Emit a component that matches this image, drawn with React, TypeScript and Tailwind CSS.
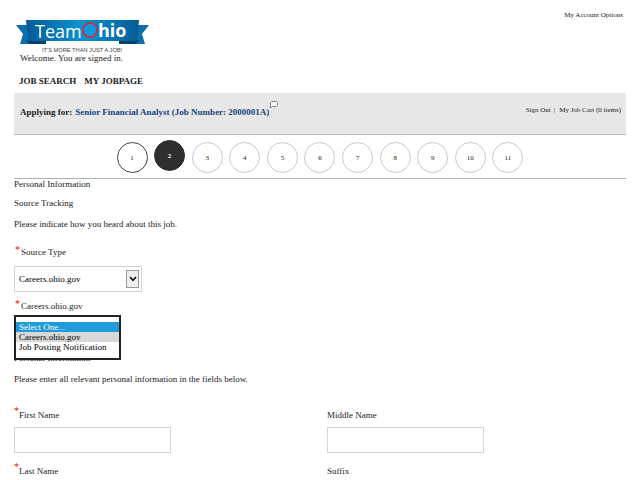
import { useState } from 'react';

const steps = [1, 2, 3, 4, 5, 6, 7, 8, 9, 10, 11];
const sources = ['Select One...', 'Careers.ohio.gov', 'Job Posting Notification'];

function Logo() {
  return (
    <svg className="block h-[38px] w-[134px]" viewBox="0 0 134 38" role="img" aria-label="TeamOhio">
      <defs>
        <linearGradient id="band" x1="0" x2="1" y1="0" y2="0">
          <stop offset="0" stopColor="#045b95" />
          <stop offset="0.5" stopColor="#0a93d3" />
          <stop offset="1" stopColor="#045b95" />
        </linearGradient>
      </defs>
      <path d="M0 6H15V25H4L7 15Z" fill="#0b6fae" />
      <path d="M133 6H118V25H129L126 15Z" fill="#0b6fae" />
      <path d="M10 21H30V25H13Z" fill="#04406e" />
      <path d="M123 21H103V25H120Z" fill="#04406e" />
      <path d="M10 1H123L121 22H12Z" fill="url(#band)" />
      <text x="19" y="19" fontSize="18" fill="#fff" fontFamily="Open Sans, sans-serif">Team</text>
      <circle cx="74" cy="11" r="7" fill="#0a9ae0" stroke="#ee1c33" strokeWidth="1.6" />
      <text x="82" y="18" fontSize="18" fontWeight="700" fill="#fff" fontFamily="Open Sans, sans-serif">hio</text>
      <text x="26" y="33" fontSize="5.7" fill="#444" fontFamily="Liberation Sans, sans-serif">IT'S MORE THAN JUST A JOB!</text>
    </svg>
  );
}

function Required() {
  return <span className="shrink-0 self-start text-[10px] leading-[10px] text-[#f00]">*</span>;
}

function Field({ id, label, required = false }: { id: string; label: string; required?: boolean }) {
  return (
    <div>
      <label htmlFor={id} className="flex h-[14px] items-end leading-[10px]">
        {required && <Required />}
        {label}
      </label>
      <input id={id} className="mt-[7px] block h-[26px] w-[157px] max-w-full border border-[#d3d3d3] px-1 outline-none" />
    </div>
  );
}

export default function App() {
  const [source, setSource] = useState('Careers.ohio.gov');
  const [active, setActive] = useState(0);
  return (
    <div className="h-screen overflow-hidden bg-white px-[14px] font-['Liberation_Serif','Times_New_Roman',serif] text-[9px] leading-[10px] text-[#222]">
      <header className="flex items-start justify-between pt-[10px]">
        <div className="pt-[9px] pl-[2px]">
          <Logo />
        </div>
        <a href="#account" className="pr-[3px] text-[7px]">My Account Options</a>
      </header>
      <p className="-mt-1 pl-[6px]">Welcome. You are signed in.</p>
      <nav className="mt-[13px] flex gap-[8px] pl-[5px] font-bold">
        <a href="#search">JOB SEARCH</a>
        <a href="#jobpage">MY JOBPAGE</a>
      </nav>

      <section className="mt-[7px] flex h-[42px] items-start justify-between border-b border-[#b5b5b5] bg-[#e7e7e7] pr-[5px] pl-[6px]">
        <h1 className="flex pt-[14px] font-bold">
          Applying for:
          <a href="#job" className="ml-[3px] text-[#15457c]">Senior Financial Analyst (Job Number: 2000001A)</a>
          <svg className="-mt-[6px] h-[8px] w-[9px]" viewBox="0 0 9 8" fill="#f3f3f3" stroke="#888" strokeWidth="1">
            <path d="M2.5 .5H7.5L8.5 1.5V4.5L7.5 5.5H3.5L1 7L1.5 5V1.5Z" />
          </svg>
        </h1>
        <div className="flex pt-[12px] text-[7px]">
          <a href="#signout">Sign Out</a>
          <span className="mx-[3px]">|</span>
          <a href="#cart" className="ml-[1px]">My Job Cart (0 items)</a>
        </div>
      </section>

      <ol className="mx-auto flex h-[43px] max-w-[407px] items-center justify-between pt-[2px]">
        {steps.map((n) => (
          <li key={n} className={n === 2 ? 'pb-[4px]' : ''}>
            <button
              className={`block size-[31px] rounded-full border text-[7px] ${
                n === 2
                  ? 'border-[#2e2e2e] bg-[#2e2e2e] font-bold text-white'
                  : n === 1
                    ? 'border-[#444]'
                    : 'border-[#c9c9c9]'
              }`}
            >
              {n}
            </button>
          </li>
        ))}
      </ol>

      <main className="border-t border-[#b0b0b0]">
        <h2>Personal Information</h2>
        <h3 className="mt-[9px]">Source Tracking</h3>
        <p className="mt-[11px]">Please indicate how you heard about this job.</p>

        <label htmlFor="source" className="mt-[16px] flex h-[12px] items-end gap-[1px] pl-[1px]">
          <Required />
          Source Type
        </label>
        <div className="relative mt-[9px] w-[128px]">
          <select
            id="source"
            value={source}
            onChange={(e) => setSource(e.target.value)}
            className="block h-[26px] w-full appearance-none border border-[#d3d3d3] bg-white pl-1 text-black"
          >
            {sources.map((s) => (
              <option key={s}>{s}</option>
            ))}
          </select>
          <span className="pointer-events-none absolute top-[4px] right-[3px] flex h-[18px] w-[13px] items-center justify-center border border-[#999] bg-[#efefef]">
            <svg className="h-[6px] w-[8px]" viewBox="0 0 8 6" fill="none" stroke="#111" strokeWidth="1.6">
              <path d="M1 1L4 4.3L7 1" />
            </svg>
          </span>
        </div>

        <label htmlFor="detail" className="mt-[7px] flex h-[12px] items-end gap-[1px] pl-[1px]">
          <Required />
          Careers.ohio.gov
        </label>
        <div className="relative mt-[4px] w-[107px]">
          <select
            id="detail"
            value={sources[active]}
            onChange={(e) => setActive(sources.indexOf(e.target.value))}
            className="block h-[26px] w-full appearance-none border border-[#d3d3d3] bg-white pl-1"
          >
            {sources.map((s) => (
              <option key={s}>{s}</option>
            ))}
          </select>
          <ul role="listbox" aria-label="Careers.ohio.gov" className="absolute inset-x-0 top-0 h-[45px] border-2 border-[#222] bg-white pt-[5px] text-black">
            {sources.map((s, i) => (
              <li
                key={s}
                role="option"
                aria-selected={i === active}
                onClick={() => setActive(i)}
                className={`h-[10px] pl-[3px] whitespace-nowrap ${i === active ? 'bg-[#1e9bd8] text-white' : i === 1 ? 'bg-[#d8d8d8]' : ''}`}
              >
                {s}
              </li>
            ))}
          </ul>
        </div>

        <h2 className="mt-[12px]">Personal Information</h2>
        <p className="mt-[11px]">Please enter all relevant personal information in the fields below.</p>

        <form className="mt-[22px] grid grid-cols-2 gap-x-[14px] gap-y-[9px]">
          <Field id="first" label="First Name" required />
          <Field id="middle" label="Middle Name" />
          <Field id="last" label="Last Name" required />
          <Field id="suffix" label="Suffix" />
        </form>
      </main>
    </div>
  );
}
